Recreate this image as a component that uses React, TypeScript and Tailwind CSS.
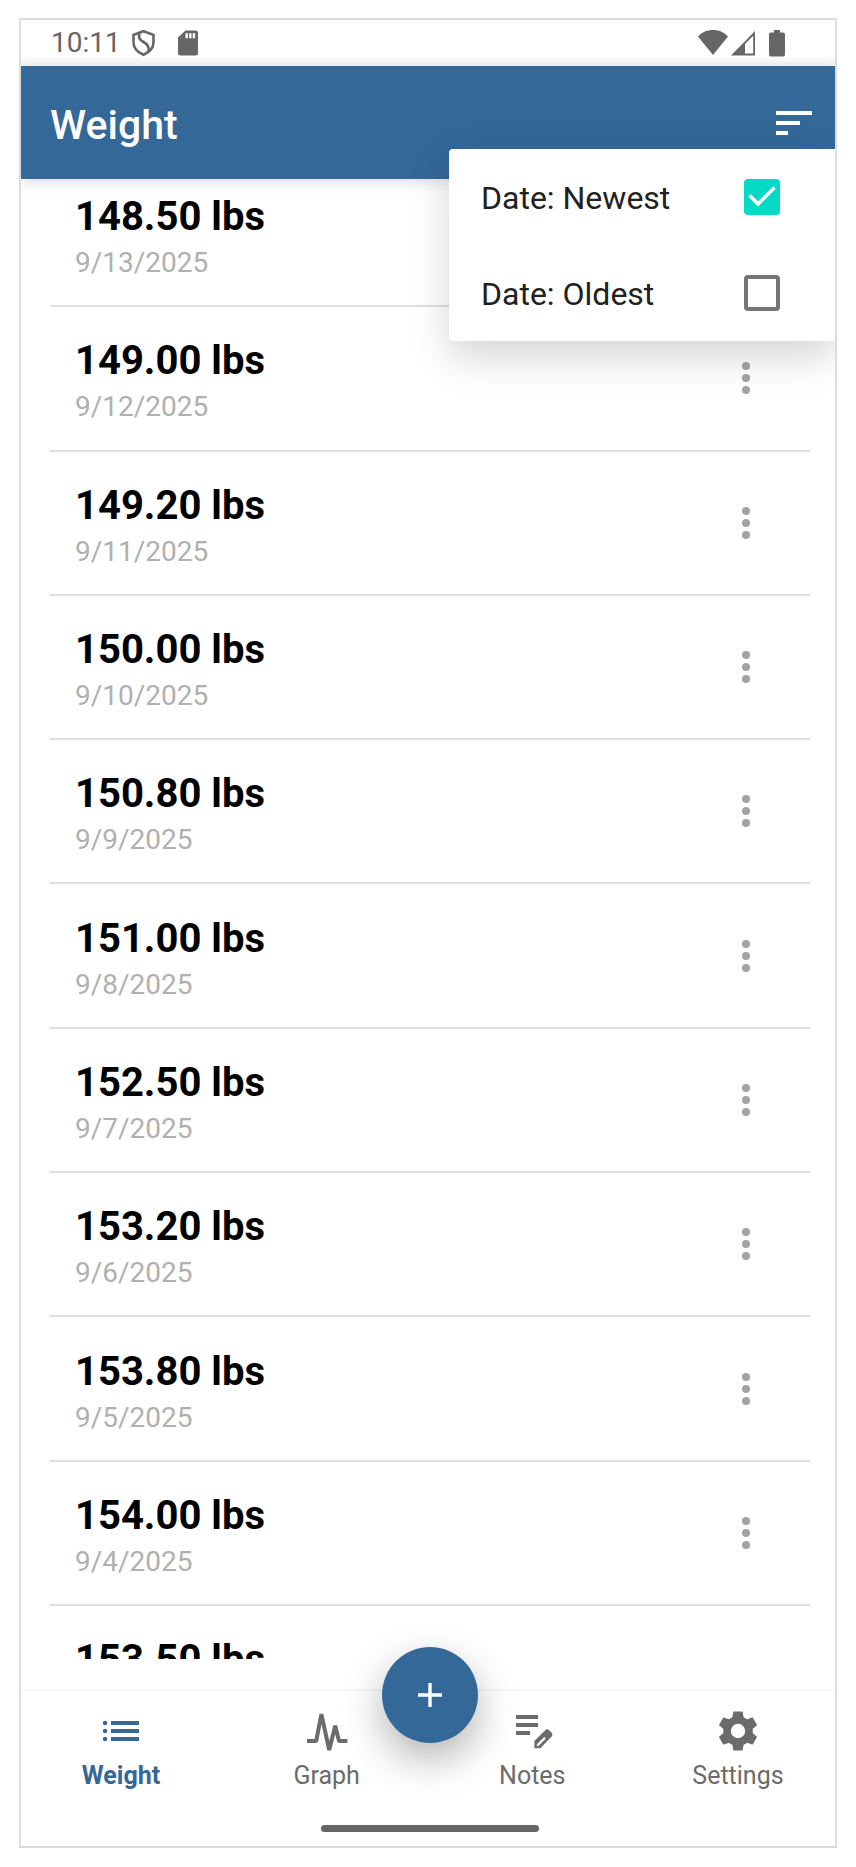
import { useState } from "react";

const entries = [
  { weight: "148.50 lbs", date: "9/13/2025" },
  { weight: "149.00 lbs", date: "9/12/2025" },
  { weight: "149.20 lbs", date: "9/11/2025" },
  { weight: "150.00 lbs", date: "9/10/2025" },
  { weight: "150.80 lbs", date: "9/9/2025" },
  { weight: "151.00 lbs", date: "9/8/2025" },
  { weight: "152.50 lbs", date: "9/7/2025" },
  { weight: "153.20 lbs", date: "9/6/2025" },
  { weight: "153.80 lbs", date: "9/5/2025" },
  { weight: "154.00 lbs", date: "9/4/2025" },
];

function StatusBar() {
  return (
    <div className="flex h-[46px] items-center bg-linear-to-b from-white from-75% to-[#f1f1f1] pr-[50px] pl-[30px] text-[#666]">
      <span className="text-[28px] leading-8">10:11</span>
      <svg className="ml-2 size-7" viewBox="0 0 28 28" fill="none" stroke="currentColor" strokeWidth="2.6" aria-hidden="true">
        <path d="M14.500 2.200 24.500 5.800v7.400c0 6-4.400 10.200-10 12.600C8.900 23.400 4.500 19.200 4.500 13.200V5.800z" />
        <path d="M10.500 4.500c-1.500 4 0 6.500 4 8.500s6 5 5 9.500" />
      </svg>
      <svg className="ml-4 size-7" viewBox="0 0 28 28" aria-hidden="true">
        <path fill="currentColor" d="M12.500 1.500h10a2.500 2.500 0 0 1 2.500 2.500v20a2.500 2.500 0 0 1-2.500 2.500h-15A2.500 2.500 0 0 1 5 24V8.500z" />
        <path fill="#fff" d="M12.500 4.200h2.400v5h-2.400zM16.100 4.200h2.400v5h-2.400zM19.700 4.200h2.400v5h-2.400z" />
      </svg>
      <div className="ml-auto flex items-center">
        <svg className="h-7 w-[30px]" viewBox="0 0 30 28" aria-hidden="true">
          <path fill="currentColor" d="M15 26 0 7.500C4 3 9.500 1 15 1s11 2 15 6.500z" />
        </svg>
        <svg className="ml-[3px] h-7 w-6" viewBox="0 0 24 28" aria-hidden="true">
          <path fill="currentColor" fillRule="evenodd" d="M0 26.500 24.500 1.500v25zM14 15v9.500h8.200V6.800z" />
        </svg>
        <svg className="ml-[14px] h-7 w-4" viewBox="0 0 16 28" aria-hidden="true">
          <path fill="currentColor" d="M5 1h6v2.500h3A2 2 0 0 1 16 5.500v20a2 2 0 0 1-2 2H2a2 2 0 0 1-2-2v-20a2 2 0 0 1 2-2h3z" />
        </svg>
      </div>
    </div>
  );
}

type Order = "newest" | "oldest";

function SortOption({ label, checked, onSelect }: { label: string; checked: boolean; onSelect: () => void }) {
  return (
    <label className="flex h-24 cursor-pointer items-center justify-between pr-[55px] pl-8 text-[32px] leading-10 text-[#212121]">
      <span className="pt-[2px]">{label}</span>
      <span className="grid size-9">
        <input
          type="checkbox"
          checked={checked}
          onChange={onSelect}
          className="col-start-1 row-start-1 size-9 appearance-none rounded-[4px] border-4 border-[#757575] checked:border-[#03dac5] checked:bg-[#03dac5]"
        />
        {checked && (
          <svg className="pointer-events-none col-start-1 row-start-1 size-9" viewBox="0 0 36 36" fill="none" stroke="#fff" strokeWidth="3.600" aria-hidden="true">
            <path d="m5.500 16.500 8.500 8.500L30.500 8.500" />
          </svg>
        )}
      </span>
    </label>
  );
}

function Header({ order, setOrder }: { order: Order; setOrder: (o: Order) => void }) {
  const [open, setOpen] = useState(true);
  return (
    <header className="relative z-10 flex h-[113px] items-center justify-between bg-[#336899] pr-[17px] pl-[29px] text-white shadow-[0_4px_12px_rgba(0,0,0,0.13)]">
      <h1 className="pt-1 text-[41px] leading-[48px] font-medium">Weight</h1>
      <button type="button" aria-label="Sort" aria-expanded={open} onClick={() => setOpen(!open)}>
        <svg className="size-12" viewBox="0 0 24 24" fill="currentColor" aria-hidden="true">
          <path d="M3 18h6v-2H3zM3 6v2h18V6zm0 7h12v-2H3z" />
        </svg>
      </button>
      {open && (
        <div className="absolute top-[83px] right-0 w-[386px] rounded-l-[4px] bg-white shadow-[0_16px_40px_rgba(0,0,0,0.17)]">
          <SortOption label="Date: Newest" checked={order === "newest"} onSelect={() => setOrder("newest")} />
          <SortOption label="Date: Oldest" checked={order === "oldest"} onSelect={() => setOrder("oldest")} />
        </div>
      )}
    </header>
  );
}

function Entry({ weight, date }: { weight: string; date: string }) {
  return (
    <li className="flex flex-1 items-center justify-between border-b-2 border-[#dfdfdf] pr-10 pl-[25px]">
      <div className="pt-[10px]">
        <p className="text-[40px] leading-[48px] font-bold text-black">{weight}</p>
        <p className="text-[28px] leading-[44px] text-[#b0b0b0]">{date}</p>
      </div>
      <button type="button" aria-label="Entry options" className="text-[#a3a3a3]">
        <svg className="size-12" viewBox="0 0 24 24" fill="currentColor" aria-hidden="true">
          <circle cx="12" cy="6" r="2" />
          <circle cx="12" cy="12" r="2" />
          <circle cx="12" cy="18" r="2" />
        </svg>
      </button>
    </li>
  );
}

const gearTeeth = [0, 60, 120, 180, 240, 300];

const tabs = [
  {
    label: "Weight",
    icon: (
      <>
        <circle cx="4" cy="8" r="1.100" />
        <circle cx="4" cy="12" r="1.100" />
        <circle cx="4" cy="16" r="1.100" />
        <path d="M7 7h14v2H7zM7 11h14v2H7zM7 15h14v2H7z" />
      </>
    ),
  },
  {
    label: "Graph",
    icon: (
      <path
        d="M2 17h4.600L9.200 3.600l3.900 17.900 3-12.100L18 17h4.200"
        fill="none"
        stroke="currentColor"
        strokeWidth="2"
        strokeLinejoin="bevel"
      />
    ),
  },
  {
    label: "Notes",
    icon: (
      <>
        <path d="M4 4h11v2H4zM4 8h11v2H4zM4 12h7v2H4z" />
        <path d="M13.200 20.600V17l5.300-5.300a1.600 1.600 0 0 1 2.200 0l1 1a1.600 1.600 0 0 1 0 2.200L16.200 20.600z" />
        <path d="m14.900 19 3.300-3.300" fill="none" stroke="#fff" strokeWidth="1.100" strokeLinecap="round" />
      </>
    ),
  },
  {
    label: "Settings",
    icon: (
      <>
        <circle cx="12" cy="12" r="7.400" />
        {gearTeeth.map((angle) => (
          <path
            key={angle}
            d="M10 2.600h4l.7 4h-5.400z"
            stroke="currentColor"
            strokeWidth=".7"
            strokeLinejoin="round"
            transform={`rotate(${angle} 12 12)`}
          />
        ))}
        <circle cx="12" cy="12" r="3.600" fill="#fff" />
      </>
    ),
  },
];

function BottomNav() {
  return (
    <nav className="relative flex justify-between pt-4 pr-[17px] pl-4">
      {tabs.map((tab, i) => (
        <a
          key={tab.label}
          href={`#${tab.label.toLowerCase()}`}
          className={
            i === 0
              ? "flex w-40 flex-col items-center gap-[5px] text-[25px] leading-8 font-bold text-[#336899]"
              : "flex w-40 flex-col items-center gap-[5px] text-[25px] leading-8 text-[#6b6b6b]"
          }
        >
          <svg className="size-12" viewBox="0 0 24 24" fill="currentColor" aria-hidden="true">
            {tab.icon}
          </svg>
          {tab.label}
        </a>
      ))}
      <button
        type="button"
        aria-label="Add weight"
        className="absolute -top-11 left-1/2 grid size-24 -translate-x-1/2 place-items-center rounded-full bg-[#336899] text-white shadow-[0_16px_40px_rgba(0,0,0,0.3)]"
      >
        <svg className="size-6" viewBox="0 0 24 24" fill="currentColor" aria-hidden="true">
          <path d="M10.300 0h3.400v10.300H24v3.400H13.700V24h-3.400V13.700H0v-3.400h10.300z" />
        </svg>
      </button>
    </nav>
  );
}

export default function App() {
  const [order, setOrder] = useState<Order>("newest");
  return (
    <div className="flex min-h-screen flex-col bg-white px-[19px] pt-[18px] pb-[19px] font-[Roboto,sans-serif]">
      <div className="flex flex-1 flex-col overflow-hidden border-2 border-[#dcdcdc]">
        <StatusBar />
        <Header order={order} setOrder={setOrder} />
        <main className="mr-[25px] mb-[30px] ml-[29px] flex flex-1 flex-col">
          <ul className="-mt-4 flex flex-1 flex-col">
            {entries.map((e) => (
              <Entry key={e.date} {...e} />
            ))}
          </ul>
          <div className="h-[53px] overflow-hidden pt-[30px] pl-[25px]">
            <p className="text-[40px] leading-[48px] font-bold text-black">153.50 lbs</p>
          </div>
        </main>
        <footer className="border-t-2 border-[#f7f7f7] pl-1">
          <BottomNav />
          <div className="flex justify-center pt-[33px] pb-[14px]">
            <div className="h-[7px] w-[218px] rounded-full bg-[#666]" />
          </div>
        </footer>
      </div>
    </div>
  );
}
